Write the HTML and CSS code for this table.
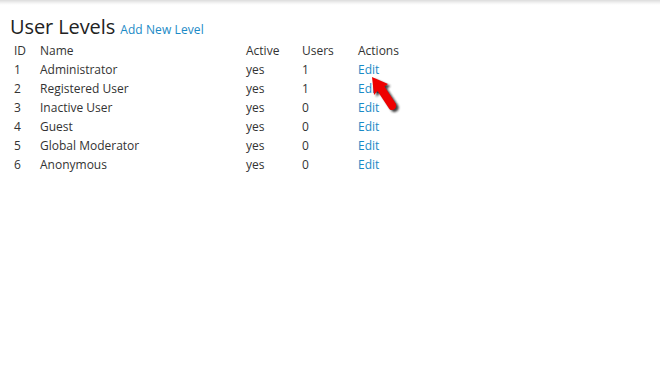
FILE: index.html
```html
<!DOCTYPE html>
<html>
<head>
<meta charset="utf-8">
<link rel="stylesheet" href="styles.css">
</head>
<body>
<div class="topbar"></div>
<div class="page">
  <h1 class="title">User Levels <a class="add" href="#">Add New Level</a></h1>
  <table class="levels">
    <thead>
      <tr><th class="c-id">ID</th><th class="c-name">Name</th><th class="c-active">Active</th><th class="c-users">Users</th><th>Actions</th></tr>
    </thead>
    <tbody>
      <tr><td>1</td><td>Administrator</td><td>yes</td><td>1</td><td><a href="#">Edit</a></td></tr>
      <tr><td>2</td><td>Registered User</td><td>yes</td><td>1</td><td><a href="#">Edit</a></td></tr>
      <tr><td>3</td><td>Inactive User</td><td>yes</td><td>0</td><td><a href="#">Edit</a></td></tr>
      <tr><td>4</td><td>Guest</td><td>yes</td><td>0</td><td><a href="#">Edit</a></td></tr>
      <tr><td>5</td><td>Global Moderator</td><td>yes</td><td>0</td><td><a href="#">Edit</a></td></tr>
      <tr><td>6</td><td>Anonymous</td><td>yes</td><td>0</td><td><a href="#">Edit</a></td></tr>
    </tbody>
  </table>
</div>
<svg class="arrow" width="40" height="46" viewBox="0 0 40 46">
  <defs>
    <filter id="blur" x="-30%" y="-30%" width="160%" height="160%"><feGaussianBlur stdDeviation="1.2"/></filter>
  </defs>
  <path d="M6 5 L22 12 L18.5 14.5 L30 32 Q31 37 26.5 38 Q24 38.5 23 36.5 L11.5 19 L8 23 Z" transform="translate(2.5,2)" fill="#222" opacity="0.85" filter="url(#blur)"/>
  <path d="M6 5 L22 12 L18.5 14.5 L30 32 Q31 37 26.5 38 Q24 38.5 23 36.5 L11.5 19 L8 23 Z" fill="#ee0000"/>
</svg>
</body>
</html>
```

FILE: styles.css
```css
html, body {
  margin: 0;
  padding: 0;
  background: #ffffff;
}
body {
  font-family: "Open Sans", "DejaVu Sans", sans-serif;
  font-size: 12px;
  color: #333333;
  position: relative;
  width: 660px;
  height: 371px;
  overflow: hidden;
}
.topbar {
  height: 5px;
  background: linear-gradient(#dcdcdc, #f4f4f4 60%, #ffffff);
}
.page {
  padding: 0 0 0 10px;
}
.title {
  margin: 10px 0 0 0;
  font-size: 20px;
  font-weight: normal;
  color: #222;
  line-height: 24px;
  letter-spacing: -0.1px;
}
.add {
  font-size: 12px;
  color: #1b8ac6;
  text-decoration: none;
  letter-spacing: 0.1px;
}
.levels {
  border-collapse: collapse;
  margin-top: -1px;
}
.levels th, .levels td {
  padding: 0 4px;
  height: 19px;
  text-align: left;
  font-weight: normal;
  white-space: nowrap;
  line-height: 19px;
}
.c-id { width: 18px; }
.c-name { width: 198px; }
.c-active { width: 48px; }
.c-users { width: 48px; }
.levels a {
  color: #1b8ac6;
  text-decoration: none;
}
.arrow {
  position: absolute;
  left: 366px;
  top: 72px;
}
```
